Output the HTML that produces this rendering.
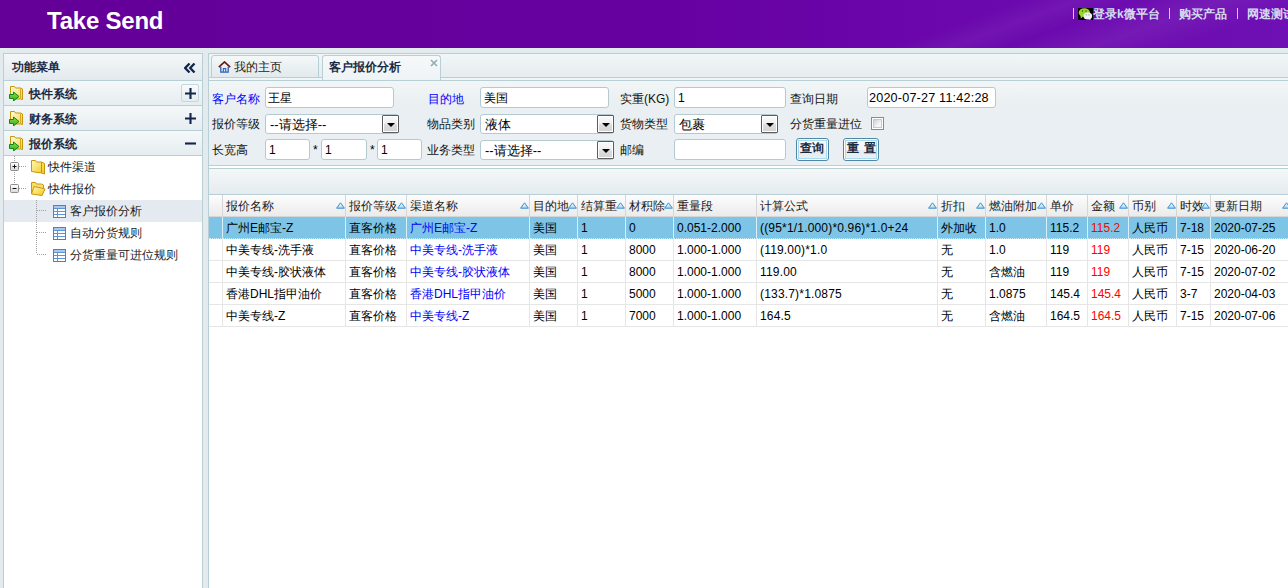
<!DOCTYPE html>
<html><head><meta charset="utf-8">
<style>
*{margin:0;padding:0;box-sizing:border-box}
html,body{width:1288px;height:588px;overflow:hidden}
body{position:relative;background:#e4ebee;font-family:"Liberation Sans",sans-serif;font-size:12px;line-height:14px;color:#000}
.a{position:absolute;white-space:nowrap}
#hdr{position:absolute;left:0;top:0;width:1288px;height:48px;background:linear-gradient(160deg,rgba(255,255,255,0) 0%,rgba(255,255,255,0) 72%,rgba(255,255,255,0.05) 76%,rgba(255,255,255,0) 80%,rgba(255,255,255,0.06) 86%,rgba(255,255,255,0) 92%),linear-gradient(90deg,#640098 0%,#6600a0 50%,#6a06ac 72%,#6e10b4 100%)}
.logo{left:47px;top:7px;line-height:normal;font-size:24px;font-weight:bold;color:#fff;letter-spacing:-0.22px}
.lk{top:7px;font-size:12px;color:#d2def0;font-weight:bold}
.sep{top:8px;width:1px;height:11px;background:#c8cce8}
#left{position:absolute;left:3px;top:53px;width:200px;height:540px;border:1px solid #b9cfd6;background:#fff}
.ph{position:absolute;left:0;top:0;width:198px;height:27px;border-bottom:1px solid #b9cfd6;background:linear-gradient(#f3f7f8,#e3eaed)}
.ah{position:absolute;left:0;width:198px;height:25px;border-bottom:1px solid #b9cfd6;background:linear-gradient(#f5f8f9,#e6edf0)}
.ah .t{left:25px;top:6px;font-weight:bold;color:#1c2b45}
.ah svg.fi{position:absolute;left:5px;top:4px}
.tn{position:absolute;left:0;width:198px;height:22px}
.tn .t{top:4px;color:#1a1a1a}
#right{position:absolute;left:208px;top:53px;width:1090px;height:540px;border:1px solid #b9cfd6;border-right:none;background:#fff}
.strip{position:absolute;left:0;top:0;width:1090px;height:24px;background:linear-gradient(#f1f6f7,#e6ecef);border-bottom:1px solid #b9cfd6}
.tab{position:absolute;top:1px;height:23px;border:1px solid #b9cfd6;border-radius:3px 3px 0 0;background:linear-gradient(#f4f8f9,#e2eaed)}
.tab.sel{height:25px;border-bottom:none;background:linear-gradient(#f6f9fa,#eef3f5)}
.form{position:absolute;left:0;top:26px;width:1090px;height:86px;background:linear-gradient(#f2f6f7 0px,#eaeff2 22px,#e9eff2 100%);border-top:1px solid #b9cfd6;border-bottom:1px solid #b9cfd6}
.lb{color:#111}
.lb.b{color:#0000ff}
.inp{position:absolute;height:21px;background:#fff;border:1px solid #b5c9d1;border-radius:3px}
.inp .v{position:absolute;left:3px;top:3px;white-space:nowrap}
.sel2{position:absolute;height:20px;background:#fff;border:1px solid #b5c9d1;border-radius:3px}
.sel2 .v{position:absolute;left:4px;top:3px;white-space:nowrap;font-size:13px}
.dd{position:absolute;right:-1px;top:0;width:17px;height:18px;border:1px solid #5c5c5c;border-radius:1px;box-shadow:inset 0 0 0 1px #fff;background:linear-gradient(#fafafa 0%,#f0f0f0 45%,#dcdcdc 55%,#d4d4d4 100%)}
.dd:after{content:"";position:absolute;left:4px;top:7px;border-left:4px solid transparent;border-right:4px solid transparent;border-top:4px solid #000}
.btn{position:absolute;top:84px;height:23px;border:1px solid #4f87a6;border-radius:3px;background:#fff;padding:1px}
.btn .in{position:absolute;left:1px;top:1px;right:1px;bottom:1px;border:1px solid #a9dcef;background:linear-gradient(#fafcfd 0%,#f3f7f9 50%,#e6edf0 51%,#e9eff2 100%)}
.btn .t{top:2px;font-weight:bold;color:#1a2a40}
.tb{position:absolute;left:0;top:114px;width:1090px;height:27px;border-top:1px solid #b9cfd6;background:linear-gradient(#f4f7f8,#e5ecef);border-bottom:1px solid #b9cfd6}
.gh{position:absolute;left:0;top:141px;width:1090px;height:22px}
.hc{position:absolute;top:0;height:22px;border-right:1px solid #d6d6d6;border-bottom:1px solid #d6d6d6;background:linear-gradient(#fdfdfd,#ebebeb);overflow:hidden}
.row{position:absolute;left:0;width:1090px;height:22px}
.rc{position:absolute;top:0;height:22px;border-right:1px solid #e6e6e6;border-bottom:1px solid #e6e6e6;overflow:hidden}
.row.s .rc{background:#7dc4e6;border-right-color:#d8eef8;border-bottom:1px dotted #d0ecf8}
.c{position:absolute;white-space:nowrap;top:4px;left:3px}
.h{position:absolute;white-space:nowrap;top:4px;left:3px;color:#1a1a1a}
.lnk{color:#0000ff}
.red{color:#ff0000}
.fm .c{letter-spacing:0.18px}
.sa{position:absolute;top:7px}
</style></head><body>
<div id="hdr">
  <div class="a logo">Take Send</div>
  <div class="a sep" style="left:1073px"></div>
  <svg class="a" style="left:1078px;top:8px" width="15" height="12" viewBox="0 0 15 12">
    <rect width="15" height="12" fill="#000"/>
    <ellipse cx="6.3" cy="4.6" rx="5.6" ry="4.4" fill="#9ad62e"/><path d="M2.5 7.5L2.8 10.5 5 8.5z" fill="#9ad62e"/>
    <circle cx="4.5" cy="3" r="0.7" fill="#2d4a10"/><circle cx="8" cy="3" r="0.7" fill="#2d4a10"/>
    <ellipse cx="9.8" cy="8" rx="4.3" ry="3.6" fill="#f4f4f4"/><path d="M12 10.5L12.8 12 10.5 11.2z" fill="#f4f4f4"/>
    <circle cx="8.3" cy="6.8" r="0.6" fill="#777"/><circle cx="11" cy="6.8" r="0.6" fill="#777"/>
  </svg>
  <div class="a lk" style="left:1093px">登录k微平台</div>
  <div class="a sep" style="left:1169px"></div>
  <div class="a lk" style="left:1179px">购买产品</div>
  <div class="a sep" style="left:1237px"></div>
  <div class="a lk" style="left:1247px">网速测试</div>
</div>

<svg width="0" height="0" style="position:absolute"><defs>
<linearGradient id="fo" x1="0" y1="0" x2="1" y2="1"><stop offset="0" stop-color="#fffde8"/><stop offset="1" stop-color="#f5d43a"/></linearGradient>
<linearGradient id="gr" x1="0" y1="0" x2="0" y2="1"><stop offset="0" stop-color="#8fe050"/><stop offset="1" stop-color="#3aa81c"/></linearGradient>
<linearGradient id="bx" x1="0" y1="0" x2="0" y2="1"><stop offset="0" stop-color="#ffffff"/><stop offset="1" stop-color="#d8d8d8"/></linearGradient>
<linearGradient id="fy" x1="0" y1="0" x2="1" y2="1"><stop offset="0" stop-color="#fff8b8"/><stop offset="1" stop-color="#f2c818"/></linearGradient>
</defs></svg>
<div id="left">
  <div class="ph"><div class="a" style="left:8px;top:6px;font-weight:bold;color:#1c2b45">功能菜单</div>
    <svg class="a" style="left:180px;top:9px" width="12" height="10" viewBox="0 0 12 10"><path d="M5.5 0.5 L1.2 5 L5.5 9.5 M10.5 0.5 L6.2 5 L10.5 9.5" stroke="#13254a" stroke-width="2.3" fill="none"/></svg>
  </div>
  <div class="ah" style="top:27px"><svg class="fi" width="16" height="16" viewBox="0 0 16 16"><path d="M1.5 9V1.5h4l1 1.5h5l2 1v10.5l-2-0.5H7" fill="url(#fo)" stroke="#c8960c" stroke-width="1"/><path d="M11.5 3.5v10" stroke="#d8a818" stroke-width="1"/><path d="M0.5 9.5h4V7l5.5 4.5L4.5 16v-2.5h-4z" fill="url(#gr)" stroke="#0a8a12" stroke-width="1"/></svg><div class="a t">快件系统</div>
    <div class="a" style="left:177px;top:3px;width:18px;height:18px;border:1px solid #c6d7de;border-radius:2px;background:linear-gradient(#f8fbfc,#e4edf1)"></div>
    <svg class="a" style="left:181px;top:7px" width="11" height="11" viewBox="0 0 11 11"><path d="M5.5 0v11M0 5.5h11" stroke="#13254a" stroke-width="2.1"/></svg>
  </div>
  <div class="ah" style="top:52px"><svg class="fi" width="16" height="16" viewBox="0 0 16 16"><path d="M1.5 9V1.5h4l1 1.5h5l2 1v10.5l-2-0.5H7" fill="url(#fo)" stroke="#c8960c" stroke-width="1"/><path d="M11.5 3.5v10" stroke="#d8a818" stroke-width="1"/><path d="M0.5 9.5h4V7l5.5 4.5L4.5 16v-2.5h-4z" fill="url(#gr)" stroke="#0a8a12" stroke-width="1"/></svg><div class="a t">财务系统</div>
    <svg class="a" style="left:181px;top:7px" width="11" height="11" viewBox="0 0 11 11"><path d="M5.5 0v11M0 5.5h11" stroke="#13254a" stroke-width="2.1"/></svg>
  </div>
  <div class="ah" style="top:77px"><svg class="fi" width="16" height="16" viewBox="0 0 16 16"><path d="M1.5 9V1.5h4l1 1.5h5l2 1v10.5l-2-0.5H7" fill="url(#fo)" stroke="#c8960c" stroke-width="1"/><path d="M11.5 3.5v10" stroke="#d8a818" stroke-width="1"/><path d="M0.5 9.5h4V7l5.5 4.5L4.5 16v-2.5h-4z" fill="url(#gr)" stroke="#0a8a12" stroke-width="1"/></svg><div class="a t">报价系统</div>
    <svg class="a" style="left:181px;top:7px" width="11" height="11" viewBox="0 0 11 11"><path d="M0 5.5h11" stroke="#13254a" stroke-width="2.1"/></svg>
  </div>
<div class="tn" style="top:102px"><svg class="a" style="left:27px;top:4px" width="15" height="15" viewBox="0 0 15 15"><path d="M0.5 11.5V0.5h4l1 1.5h5l3 1.5v10.5l-3-1z" fill="url(#fy)" stroke="#c8960c"/><path d="M10.5 2.2v10.5" stroke="#c8960c"/></svg><div class="a t" style="left:44px">快件渠道</div></div>
  <div class="tn" style="top:124px"><svg class="a" style="left:27px;top:4px" width="15" height="15" viewBox="0 0 15 15"><path d="M0.5 11.5V0.5h4l1 1.5h5l2 1v3" fill="#f8e070" stroke="#c8960c"/><path d="M0.5 12L3 4.5l7.5 1.5 3.5 1L11 13.5z" fill="url(#fy)" stroke="#c8960c"/></svg><div class="a t" style="left:44px">快件报价</div></div>
  <div class="tn" style="top:146px;background:#e5eaf1"><svg class="a" style="left:49px;top:5px" width="13" height="13" viewBox="0 0 13 13"><rect x="0.5" y="0.5" width="12" height="12" fill="#fff" stroke="#4a80cc"/><rect x="1" y="1" width="11" height="2.5" fill="#a9c6ee"/><path d="M1 3.5h11M1 6.5h11M1 9.5h11M4.5 4v8" stroke="#5e93d8"/></svg><div class="a t" style="left:66px">客户报价分析</div></div>
  <div class="tn" style="top:168px"><svg class="a" style="left:49px;top:5px" width="13" height="13" viewBox="0 0 13 13"><rect x="0.5" y="0.5" width="12" height="12" fill="#fff" stroke="#4a80cc"/><rect x="1" y="1" width="11" height="2.5" fill="#a9c6ee"/><path d="M1 3.5h11M1 6.5h11M1 9.5h11M4.5 4v8" stroke="#5e93d8"/></svg><div class="a t" style="left:66px">自动分货规则</div></div>
  <div class="tn" style="top:190px"><svg class="a" style="left:49px;top:5px" width="13" height="13" viewBox="0 0 13 13"><rect x="0.5" y="0.5" width="12" height="12" fill="#fff" stroke="#4a80cc"/><rect x="1" y="1" width="11" height="2.5" fill="#a9c6ee"/><path d="M1 3.5h11M1 6.5h11M1 9.5h11M4.5 4v8" stroke="#5e93d8"/></svg><div class="a t" style="left:66px">分货重量可进位规则</div></div>
  <!-- tree -->
  <div id="tree" class="a" style="left:0;top:102px;width:198px;height:120px">
    <svg class="a" style="left:0;top:0" width="198" height="120" viewBox="0 0 198 120">
      <g stroke="#a0a0a0" stroke-width="1" stroke-dasharray="1 1" fill="none">
        <path d="M10.5 0V32"/><path d="M15 10.5H22"/><path d="M15 32.5H22"/>
        <path d="M32.5 44V98"/><path d="M33 54.5H43"/><path d="M33 76.5H43"/><path d="M33 98.5H43"/>
      </g>
      <rect x="6.5" y="6.5" width="8" height="8" rx="1" fill="url(#bx)" stroke="#8c8c8c"/><path d="M8.5 10.5h4M10.5 8.5v4" stroke="#111"/>
      <rect x="6.5" y="28.5" width="8" height="8" rx="1" fill="url(#bx)" stroke="#8c8c8c"/><path d="M8.5 32.5h4" stroke="#111"/>
    </svg>
  </div>
  </div>

<div id="right">
  <div class="a" style="left:0;top:24px;width:1090px;height:2px;background:#f0f5f6"></div>
  <div class="strip">
    <div class="tab" style="left:2px;width:108px">
      <svg class="a" style="left:6px;top:5px" width="13" height="12" viewBox="0 0 13 12"><path d="M0.8 6.2L6.5 0.9l5.7 5.3" stroke="#6b1616" stroke-width="1.6" fill="none"/><path d="M2.8 5.8v5.4h7.4V5.8" stroke="#2a62c0" stroke-width="1.3" fill="none"/><path d="M5.3 11V7.6h2.4V11" stroke="#2a62c0" stroke-width="1.1" fill="none"/></svg>
      <div class="a" style="left:22px;top:4px;color:#222">我的主页</div>
    </div>
    <div class="tab sel" style="left:113px;width:119px">
      <div class="a" style="left:6px;top:4px;font-weight:bold;color:#1c2b45">客户报价分析</div>
      <svg class="a" style="left:107px;top:3px" width="8" height="8" viewBox="0 0 8 8"><path d="M1 1l6 6M7 1L1 7" stroke="#93aab3" stroke-width="1.6"/></svg>
    </div>
  </div>
  <div class="form">
    <!-- row1 -->
    <div class="a lb b" style="left:3px;top:11px">客户名称</div>
    <div class="inp" style="left:56px;top:6px;width:129px"><span class="v" style="left:2px">王星</span></div>
    <div class="a lb b" style="left:219px;top:11px">目的地</div>
    <div class="inp" style="left:271px;top:6px;width:129px"><span class="v">美国</span></div>
    <div class="a lb" style="left:411px;top:11px">实重(KG)</div>
    <div class="inp" style="left:465px;top:6px;width:112px"><span class="v">1</span></div>
    <div class="a lb" style="left:581px;top:11px">查询日期</div>
    <div class="inp" style="left:658px;top:6px;width:129px"><span class="v" style="left:1px;font-size:12.6px;letter-spacing:0.2px">2020-07-27 11:42:28</span></div>
    <!-- row2 -->
    <div class="a lb" style="left:3px;top:36px">报价等级</div>
    <div class="sel2" style="left:56px;top:33px;width:134px"><span class="v">--请选择--</span><div class="dd"></div></div>
    <div class="a lb" style="left:218px;top:36px">物品类别</div>
    <div class="sel2" style="left:271px;top:33px;width:134px"><span class="v">液体</span><div class="dd"></div></div>
    <div class="a lb" style="left:411px;top:36px">货物类型</div>
    <div class="sel2" style="left:465px;top:33px;width:104px"><span class="v">包裹</span><div class="dd"></div></div>
    <div class="a lb" style="left:581px;top:36px">分货重量进位</div>
    <div class="a" style="left:662px;top:36px;width:13px;height:13px;border:1px solid #8a8a8a;background:#fff"><div class="a" style="left:1px;top:1px;width:9px;height:9px;border:1px solid #c4c8d0;background:linear-gradient(135deg,#cdd1d9,#f6f6f6 70%)"></div></div>
    <!-- row3 -->
    <div class="a lb" style="left:3px;top:62px">长宽高</div>
    <div class="inp" style="left:56px;top:58px;width:45px"><span class="v">1</span></div>
    <div class="a" style="left:104px;top:62px">*</div>
    <div class="inp" style="left:112px;top:58px;width:46px"><span class="v">1</span></div>
    <div class="a" style="left:161px;top:62px">*</div>
    <div class="inp" style="left:168px;top:58px;width:45px"><span class="v">1</span></div>
    <div class="a lb" style="left:218px;top:62px">业务类型</div>
    <div class="sel2" style="left:271px;top:59px;width:134px"><span class="v">--请选择--</span><div class="dd"></div></div>
    <div class="a lb" style="left:411px;top:62px">邮编</div>
    <div class="inp" style="left:465px;top:58px;width:112px"></div>
  </div>
  <div class="btn" style="left:587px;width:33px"><div class="in"></div><div class="a t" style="left:3px">查询</div></div>
  <div class="btn" style="left:634px;width:36px"><div class="in"></div><div class="a t" style="left:3px;word-spacing:1.5px">重 置</div></div>
  <div class="tb"></div>
  <svg width="0" height="0" style="position:absolute"><defs><linearGradient id="ag" x1="0" y1="0" x2="0" y2="1"><stop offset="0" stop-color="#ffffff"/><stop offset="1" stop-color="#9fd8f4"/></linearGradient></defs></svg>
<!--GRID-->
<div class="gh">
<div class="hc" style="left:0;width:14px"></div>
<div class="hc" style="left:14px;width:123px"><span class="h">报价名称</span><svg class="sa" style="left:113px" width="9" height="7" viewBox="0 0 9 7"><defs></defs><path d="M4.5 0.8L8.4 6.2H0.6z" fill="url(#ag)" stroke="#3d8fcf" stroke-width="1"/></svg></div>
<div class="hc" style="left:137px;width:61px"><span class="h">报价等级</span><svg class="sa" style="left:51px" width="9" height="7" viewBox="0 0 9 7"><defs></defs><path d="M4.5 0.8L8.4 6.2H0.6z" fill="url(#ag)" stroke="#3d8fcf" stroke-width="1"/></svg></div>
<div class="hc" style="left:198px;width:123px"><span class="h">渠道名称</span><svg class="sa" style="left:113px" width="9" height="7" viewBox="0 0 9 7"><defs></defs><path d="M4.5 0.8L8.4 6.2H0.6z" fill="url(#ag)" stroke="#3d8fcf" stroke-width="1"/></svg></div>
<div class="hc" style="left:321px;width:48px"><span class="h">目的地</span><svg class="sa" style="left:38px" width="9" height="7" viewBox="0 0 9 7"><defs></defs><path d="M4.5 0.8L8.4 6.2H0.6z" fill="url(#ag)" stroke="#3d8fcf" stroke-width="1"/></svg></div>
<div class="hc" style="left:369px;width:48px"><span class="h">结算重</span><svg class="sa" style="left:38px" width="9" height="7" viewBox="0 0 9 7"><defs></defs><path d="M4.5 0.8L8.4 6.2H0.6z" fill="url(#ag)" stroke="#3d8fcf" stroke-width="1"/></svg></div>
<div class="hc" style="left:417px;width:48px"><span class="h">材积除</span><svg class="sa" style="left:38px" width="9" height="7" viewBox="0 0 9 7"><defs></defs><path d="M4.5 0.8L8.4 6.2H0.6z" fill="url(#ag)" stroke="#3d8fcf" stroke-width="1"/></svg></div>
<div class="hc" style="left:465px;width:83px"><span class="h">重量段</span></div>
<div class="hc" style="left:548px;width:181px"><span class="h">计算公式</span><svg class="sa" style="left:171px" width="9" height="7" viewBox="0 0 9 7"><defs></defs><path d="M4.5 0.8L8.4 6.2H0.6z" fill="url(#ag)" stroke="#3d8fcf" stroke-width="1"/></svg></div>
<div class="hc" style="left:729px;width:48px"><span class="h">折扣</span><svg class="sa" style="left:38px" width="9" height="7" viewBox="0 0 9 7"><defs></defs><path d="M4.5 0.8L8.4 6.2H0.6z" fill="url(#ag)" stroke="#3d8fcf" stroke-width="1"/></svg></div>
<div class="hc" style="left:777px;width:61px"><span class="h">燃油附加</span><svg class="sa" style="left:51px" width="9" height="7" viewBox="0 0 9 7"><defs></defs><path d="M4.5 0.8L8.4 6.2H0.6z" fill="url(#ag)" stroke="#3d8fcf" stroke-width="1"/></svg></div>
<div class="hc" style="left:838px;width:41px"><span class="h">单价</span></div>
<div class="hc" style="left:879px;width:41px"><span class="h">金额</span><svg class="sa" style="left:31px" width="9" height="7" viewBox="0 0 9 7"><defs></defs><path d="M4.5 0.8L8.4 6.2H0.6z" fill="url(#ag)" stroke="#3d8fcf" stroke-width="1"/></svg></div>
<div class="hc" style="left:920px;width:48px"><span class="h">币别</span><svg class="sa" style="left:38px" width="9" height="7" viewBox="0 0 9 7"><defs></defs><path d="M4.5 0.8L8.4 6.2H0.6z" fill="url(#ag)" stroke="#3d8fcf" stroke-width="1"/></svg></div>
<div class="hc" style="left:968px;width:34px"><span class="h">时效</span><svg class="sa" style="left:24px" width="9" height="7" viewBox="0 0 9 7"><defs></defs><path d="M4.5 0.8L8.4 6.2H0.6z" fill="url(#ag)" stroke="#3d8fcf" stroke-width="1"/></svg></div>
<div class="hc" style="left:1002px;width:81px"><span class="h">更新日期</span><svg class="sa" style="left:71px" width="9" height="7" viewBox="0 0 9 7"><defs></defs><path d="M4.5 0.8L8.4 6.2H0.6z" fill="url(#ag)" stroke="#3d8fcf" stroke-width="1"/></svg></div>
</div>
<div class="row s" style="top:163px">
<div class="rc" style="left:0;width:14px"></div>
<div class="rc" style="left:14px;width:123px"><span class="c">广州E邮宝-Z</span></div>
<div class="rc" style="left:137px;width:61px"><span class="c">直客价格</span></div>
<div class="rc lnk" style="left:198px;width:123px"><span class="c">广州E邮宝-Z</span></div>
<div class="rc" style="left:321px;width:48px"><span class="c">美国</span></div>
<div class="rc" style="left:369px;width:48px"><span class="c">1</span></div>
<div class="rc" style="left:417px;width:48px"><span class="c">0</span></div>
<div class="rc" style="left:465px;width:83px"><span class="c">0.051-2.000</span></div>
<div class="rc fm" style="left:548px;width:181px"><span class="c">((95*1/1.000)*0.96)*1.0+24</span></div>
<div class="rc" style="left:729px;width:48px"><span class="c">外加收</span></div>
<div class="rc" style="left:777px;width:61px"><span class="c">1.0</span></div>
<div class="rc" style="left:838px;width:41px"><span class="c">115.2</span></div>
<div class="rc red" style="left:879px;width:41px"><span class="c">115.2</span></div>
<div class="rc" style="left:920px;width:48px"><span class="c">人民币</span></div>
<div class="rc" style="left:968px;width:34px"><span class="c">7-18</span></div>
<div class="rc" style="left:1002px;width:81px"><span class="c">2020-07-25</span></div>
</div>
<div class="row" style="top:185px">
<div class="rc" style="left:0;width:14px"></div>
<div class="rc" style="left:14px;width:123px"><span class="c">中美专线-洗手液</span></div>
<div class="rc" style="left:137px;width:61px"><span class="c">直客价格</span></div>
<div class="rc lnk" style="left:198px;width:123px"><span class="c">中美专线-洗手液</span></div>
<div class="rc" style="left:321px;width:48px"><span class="c">美国</span></div>
<div class="rc" style="left:369px;width:48px"><span class="c">1</span></div>
<div class="rc" style="left:417px;width:48px"><span class="c">8000</span></div>
<div class="rc" style="left:465px;width:83px"><span class="c">1.000-1.000</span></div>
<div class="rc fm" style="left:548px;width:181px"><span class="c">(119.00)*1.0</span></div>
<div class="rc" style="left:729px;width:48px"><span class="c">无</span></div>
<div class="rc" style="left:777px;width:61px"><span class="c">1.0</span></div>
<div class="rc" style="left:838px;width:41px"><span class="c">119</span></div>
<div class="rc red" style="left:879px;width:41px"><span class="c">119</span></div>
<div class="rc" style="left:920px;width:48px"><span class="c">人民币</span></div>
<div class="rc" style="left:968px;width:34px"><span class="c">7-15</span></div>
<div class="rc" style="left:1002px;width:81px"><span class="c">2020-06-20</span></div>
</div>
<div class="row" style="top:207px">
<div class="rc" style="left:0;width:14px"></div>
<div class="rc" style="left:14px;width:123px"><span class="c">中美专线-胶状液体</span></div>
<div class="rc" style="left:137px;width:61px"><span class="c">直客价格</span></div>
<div class="rc lnk" style="left:198px;width:123px"><span class="c">中美专线-胶状液体</span></div>
<div class="rc" style="left:321px;width:48px"><span class="c">美国</span></div>
<div class="rc" style="left:369px;width:48px"><span class="c">1</span></div>
<div class="rc" style="left:417px;width:48px"><span class="c">8000</span></div>
<div class="rc" style="left:465px;width:83px"><span class="c">1.000-1.000</span></div>
<div class="rc fm" style="left:548px;width:181px"><span class="c">119.00</span></div>
<div class="rc" style="left:729px;width:48px"><span class="c">无</span></div>
<div class="rc" style="left:777px;width:61px"><span class="c">含燃油</span></div>
<div class="rc" style="left:838px;width:41px"><span class="c">119</span></div>
<div class="rc red" style="left:879px;width:41px"><span class="c">119</span></div>
<div class="rc" style="left:920px;width:48px"><span class="c">人民币</span></div>
<div class="rc" style="left:968px;width:34px"><span class="c">7-15</span></div>
<div class="rc" style="left:1002px;width:81px"><span class="c">2020-07-02</span></div>
</div>
<div class="row" style="top:229px">
<div class="rc" style="left:0;width:14px"></div>
<div class="rc" style="left:14px;width:123px"><span class="c">香港DHL指甲油价</span></div>
<div class="rc" style="left:137px;width:61px"><span class="c">直客价格</span></div>
<div class="rc lnk" style="left:198px;width:123px"><span class="c">香港DHL指甲油价</span></div>
<div class="rc" style="left:321px;width:48px"><span class="c">美国</span></div>
<div class="rc" style="left:369px;width:48px"><span class="c">1</span></div>
<div class="rc" style="left:417px;width:48px"><span class="c">5000</span></div>
<div class="rc" style="left:465px;width:83px"><span class="c">1.000-1.000</span></div>
<div class="rc fm" style="left:548px;width:181px"><span class="c">(133.7)*1.0875</span></div>
<div class="rc" style="left:729px;width:48px"><span class="c">无</span></div>
<div class="rc" style="left:777px;width:61px"><span class="c">1.0875</span></div>
<div class="rc" style="left:838px;width:41px"><span class="c">145.4</span></div>
<div class="rc red" style="left:879px;width:41px"><span class="c">145.4</span></div>
<div class="rc" style="left:920px;width:48px"><span class="c">人民币</span></div>
<div class="rc" style="left:968px;width:34px"><span class="c">3-7</span></div>
<div class="rc" style="left:1002px;width:81px"><span class="c">2020-04-03</span></div>
</div>
<div class="row" style="top:251px">
<div class="rc" style="left:0;width:14px"></div>
<div class="rc" style="left:14px;width:123px"><span class="c">中美专线-Z</span></div>
<div class="rc" style="left:137px;width:61px"><span class="c">直客价格</span></div>
<div class="rc lnk" style="left:198px;width:123px"><span class="c">中美专线-Z</span></div>
<div class="rc" style="left:321px;width:48px"><span class="c">美国</span></div>
<div class="rc" style="left:369px;width:48px"><span class="c">1</span></div>
<div class="rc" style="left:417px;width:48px"><span class="c">7000</span></div>
<div class="rc" style="left:465px;width:83px"><span class="c">1.000-1.000</span></div>
<div class="rc fm" style="left:548px;width:181px"><span class="c">164.5</span></div>
<div class="rc" style="left:729px;width:48px"><span class="c">无</span></div>
<div class="rc" style="left:777px;width:61px"><span class="c">含燃油</span></div>
<div class="rc" style="left:838px;width:41px"><span class="c">164.5</span></div>
<div class="rc red" style="left:879px;width:41px"><span class="c">164.5</span></div>
<div class="rc" style="left:920px;width:48px"><span class="c">人民币</span></div>
<div class="rc" style="left:968px;width:34px"><span class="c">7-15</span></div>
<div class="rc" style="left:1002px;width:81px"><span class="c">2020-07-06</span></div>
</div>
<!--/GRID-->
</div>
</body></html>
